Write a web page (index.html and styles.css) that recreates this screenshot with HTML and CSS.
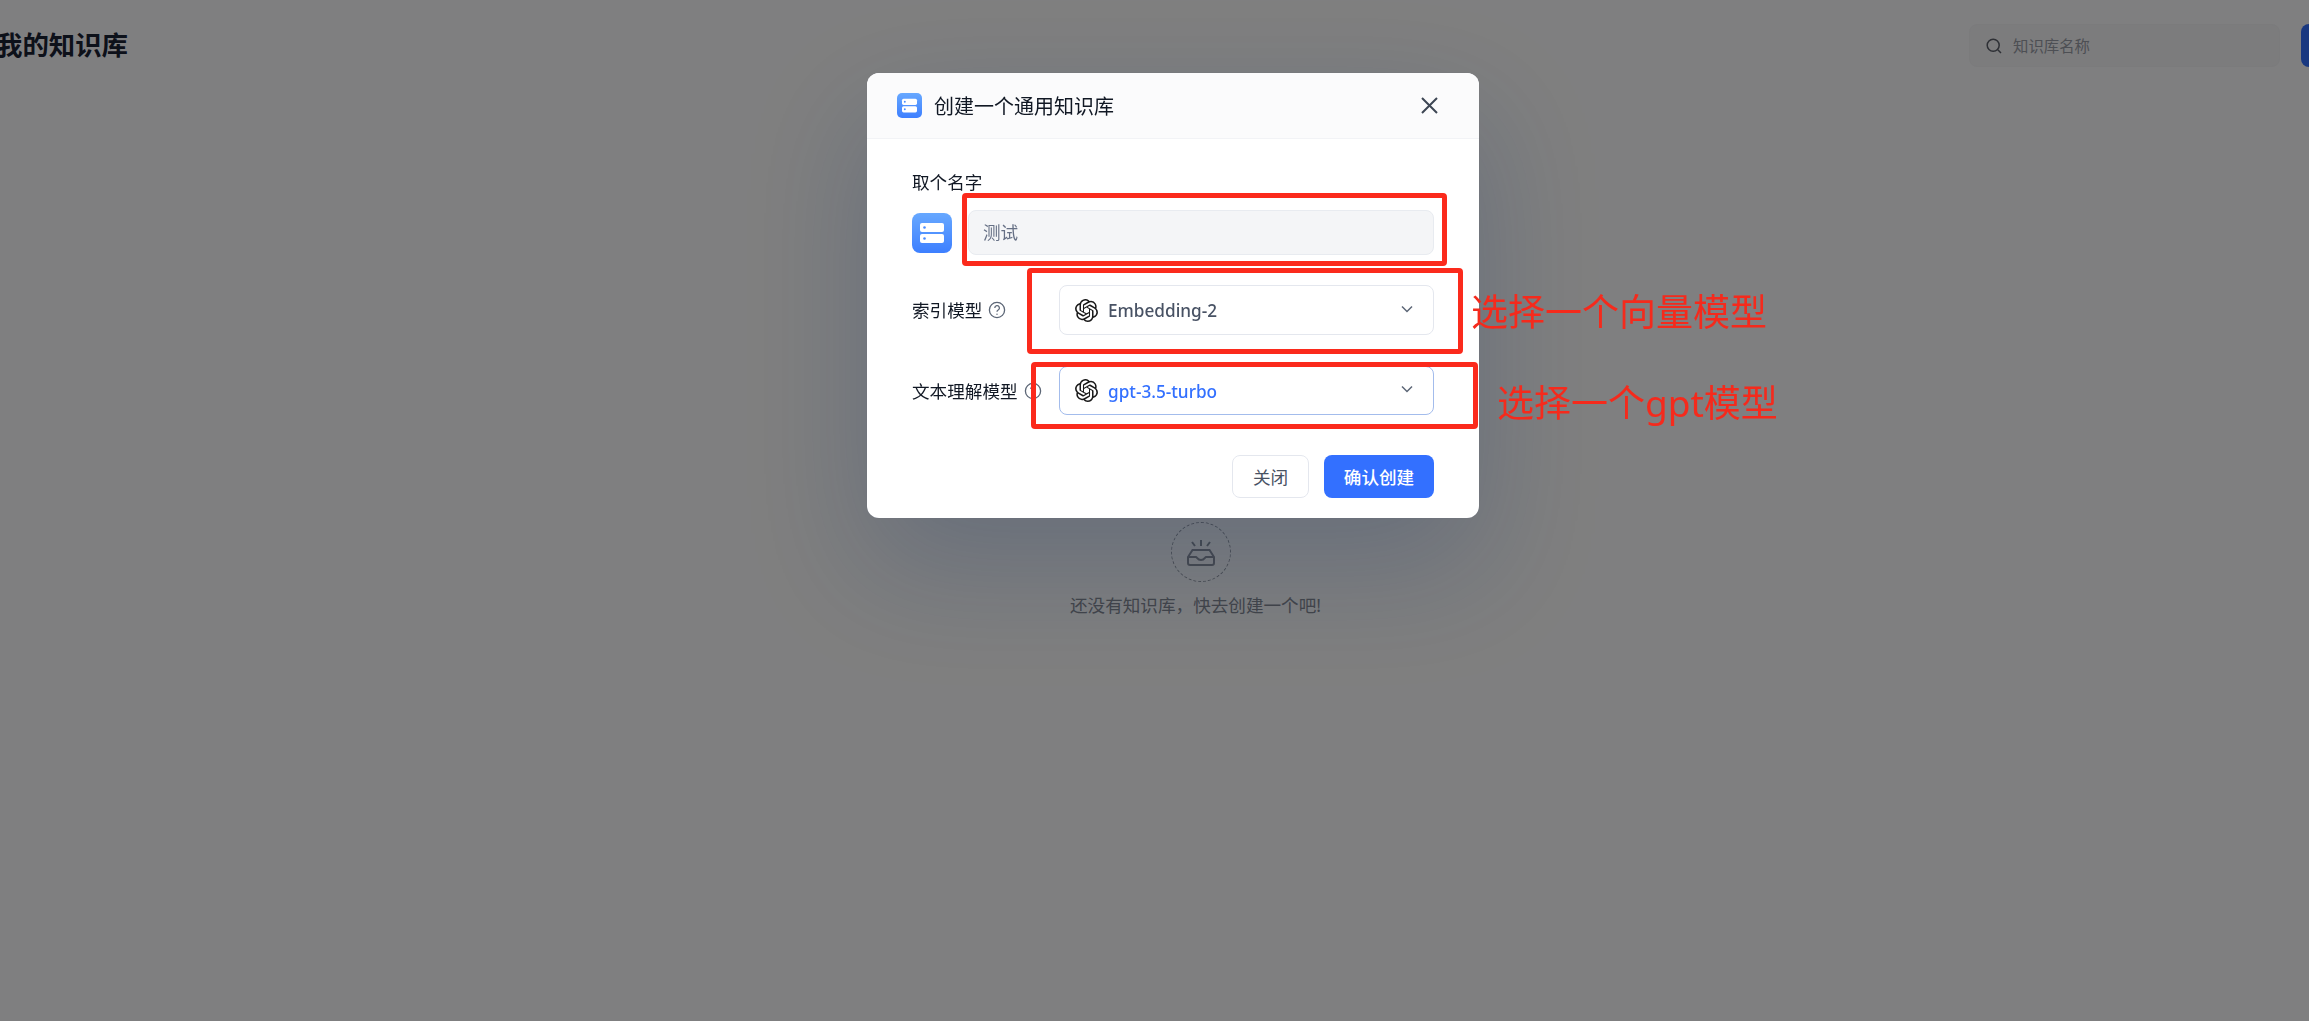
FILE: index.html
```html
<!DOCTYPE html>
<html lang="zh">
<head>
    <meta charset="UTF-8">
    <meta name="viewport" content="width=device-width, initial-scale=1.0">
    <title>我的知识库</title>
    <link rel="stylesheet" href="styles.css">
</head>
<body>
    <header class="topbar">
        <h1 class="page-title">我的知识库</h1>
        <div class="search">
            <svg class="search-icon" viewBox="0 0 16 16"><circle cx="7.2" cy="7.2" r="6"/><path d="M11.8 11.8 15 15"/></svg>
            <span>知识库名称</span>
        </div>
        <div class="new-button"></div>
    </header>

    <main class="empty">
        <div class="empty-circle">
            <svg class="empty-icon" viewBox="0 0 30 27"><path d="M15 1v6M6 3l3 4M24 3l-3 4"/><path d="M6.5 11h17L28 18v6a2 2 0 0 1-2 2H4a2 2 0 0 1-2-2v-6z"/><path d="M2 18h8c1 0 1.500 3 5 3s4-3 5-3h8"/></svg>
        </div>
        <p class="empty-text">还没有知识库&#xFF0C;快去创建一个吧!</p>
    </main>

    <div class="overlay">
        <section class="modal">
            <div class="modal-header">
                <svg class="db-icon db-icon-small" viewBox="0 0 40 40"><defs><linearGradient id="dbGradA" x1="0" y1="0" x2="0" y2="1"><stop offset="0" stop-color="#67a8ff"/><stop offset="1" stop-color="#3d7fff"/></linearGradient></defs><rect width="40" height="40" rx="8" fill="url(#dbGradA)"/><rect x="8" y="9" width="24" height="10" rx="2.500" fill="#fff"/><rect x="8" y="21" width="24" height="10" rx="2.500" fill="#fff"/><circle cx="12.500" cy="14" r="1.500" fill="#4a8cff"/><circle cx="12.500" cy="26" r="1.500" fill="#4a8cff"/></svg>
                <h2 class="modal-title">创建一个通用知识库</h2>
                <svg class="close-icon" viewBox="0 0 17 17"><path d="M1 1l15 15M16 1 1 16"/></svg>
            </div>
            <div class="modal-body">
                <div class="label name-label">取个名字</div>
                <div class="name-row">
                    <svg class="db-icon" viewBox="0 0 40 40"><defs><linearGradient id="dbGradB" x1="0" y1="0" x2="0" y2="1"><stop offset="0" stop-color="#67a8ff"/><stop offset="1" stop-color="#3d7fff"/></linearGradient></defs><rect width="40" height="40" rx="8" fill="url(#dbGradB)"/><rect x="8" y="10" width="24" height="9" rx="2" fill="#fff"/><rect x="8" y="21" width="24" height="9" rx="2" fill="#fff"/><circle cx="12.500" cy="14.500" r="1.300" fill="#4a8cff"/><circle cx="12.500" cy="25.500" r="1.300" fill="#4a8cff"/></svg>
                    <div class="name-input">测试</div>
                </div>

                <div class="field field-first">
                    <div class="label field-label">索引模型
                        <svg class="help-icon" viewBox="0 0 18 18"><circle cx="9" cy="9" r="7.600"/><path d="M6.800 7a2.300 2.300 0 1 1 3.400 2c-.8.500-1.200.9-1.200 1.800"/><circle class="help-dot" cx="9" cy="13.200" r=".7"/></svg>
                    </div>
                    <div class="select">
                        <svg class="openai-icon" viewBox="0 0 24 24"><path d="M22.2819 9.8211a5.9847 5.9847 0 0 0-.5157-4.9108 6.0462 6.0462 0 0 0-6.5098-2.9A6.0651 6.0651 0 0 0 4.9807 4.1818a5.9847 5.9847 0 0 0-3.9977 2.9 6.0462 6.0462 0 0 0 .7427 7.0966 5.98 5.98 0 0 0 .511 4.9107 6.051 6.051 0 0 0 6.5146 2.9001A5.9847 5.9847 0 0 0 13.2599 24a6.0557 6.0557 0 0 0 5.7718-4.2058 5.9894 5.9894 0 0 0 3.9977-2.9001 6.0557 6.0557 0 0 0-.7475-7.0729zm-9.022 12.6081a4.4755 4.4755 0 0 1-2.8764-1.0408l.1419-.0804 4.7783-2.7582a.7948.7948 0 0 0 .3927-.6813v-6.7369l2.02 1.1686a.071.071 0 0 1 .038.052v5.5826a4.504 4.504 0 0 1-4.4945 4.4944zm-9.6607-4.1254a4.4708 4.4708 0 0 1-.5346-3.0137l.142.0852 4.783 2.7582a.7712.7712 0 0 0 .7806 0l5.8428-3.3685v2.3324a.0804.0804 0 0 1-.0332.0615L9.74 19.9502a4.4992 4.4992 0 0 1-6.1408-1.6464zM2.3408 7.8956a4.485 4.485 0 0 1 2.3655-1.9728V11.6a.7664.7664 0 0 0 .3879.6765l5.8144 3.3543-2.0201 1.1685a.0757.0757 0 0 1-.071 0l-4.8303-2.7865A4.504 4.504 0 0 1 2.3408 7.872zm16.5963 3.8558L13.1038 8.364 15.1192 7.2a.0757.0757 0 0 1 .071 0l4.8303 2.7913a4.4944 4.4944 0 0 1-.6765 8.1042v-5.6772a.79.79 0 0 0-.407-.667zm2.0107-3.0231l-.142-.0852-4.7735-2.7818a.7759.7759 0 0 0-.7854 0L9.409 9.2297V6.8974a.0662.0662 0 0 1 .0284-.0615l4.8303-2.7866a4.4992 4.4992 0 0 1 6.6802 4.66zM8.3065 12.863l-2.02-1.1638a.0804.0804 0 0 1-.038-.0567V6.0742a4.4992 4.4992 0 0 1 7.3757-3.4537l-.142.0805L8.704 5.459a.7948.7948 0 0 0-.3927.6813zm1.0976-2.3654l2.602-1.4998 2.6069 1.4998v2.9994l-2.5974 1.4997-2.6067-1.4997Z"/></svg>
                        <span class="select-text">Embedding-2</span>
                        <svg class="chevron" viewBox="0 0 12 8"><path d="M1 1.500 6 6.500 11 1.500"/></svg>
                    </div>
                </div>

                <div class="field field-second">
                    <div class="label field-label">文本理解模型
                        <svg class="help-icon" viewBox="0 0 18 18"><circle cx="9" cy="9" r="7.600"/><path d="M6.800 7a2.300 2.300 0 1 1 3.400 2c-.8.500-1.200.9-1.200 1.800"/><circle class="help-dot" cx="9" cy="13.200" r=".7"/></svg>
                    </div>
                    <div class="select select-active">
                        <svg class="openai-icon" viewBox="0 0 24 24"><path d="M22.2819 9.8211a5.9847 5.9847 0 0 0-.5157-4.9108 6.0462 6.0462 0 0 0-6.5098-2.9A6.0651 6.0651 0 0 0 4.9807 4.1818a5.9847 5.9847 0 0 0-3.9977 2.9 6.0462 6.0462 0 0 0 .7427 7.0966 5.98 5.98 0 0 0 .511 4.9107 6.051 6.051 0 0 0 6.5146 2.9001A5.9847 5.9847 0 0 0 13.2599 24a6.0557 6.0557 0 0 0 5.7718-4.2058 5.9894 5.9894 0 0 0 3.9977-2.9001 6.0557 6.0557 0 0 0-.7475-7.0729zm-9.022 12.6081a4.4755 4.4755 0 0 1-2.8764-1.0408l.1419-.0804 4.7783-2.7582a.7948.7948 0 0 0 .3927-.6813v-6.7369l2.02 1.1686a.071.071 0 0 1 .038.052v5.5826a4.504 4.504 0 0 1-4.4945 4.4944zm-9.6607-4.1254a4.4708 4.4708 0 0 1-.5346-3.0137l.142.0852 4.783 2.7582a.7712.7712 0 0 0 .7806 0l5.8428-3.3685v2.3324a.0804.0804 0 0 1-.0332.0615L9.74 19.9502a4.4992 4.4992 0 0 1-6.1408-1.6464zM2.3408 7.8956a4.485 4.485 0 0 1 2.3655-1.9728V11.6a.7664.7664 0 0 0 .3879.6765l5.8144 3.3543-2.0201 1.1685a.0757.0757 0 0 1-.071 0l-4.8303-2.7865A4.504 4.504 0 0 1 2.3408 7.872zm16.5963 3.8558L13.1038 8.364 15.1192 7.2a.0757.0757 0 0 1 .071 0l4.8303 2.7913a4.4944 4.4944 0 0 1-.6765 8.1042v-5.6772a.79.79 0 0 0-.407-.667zm2.0107-3.0231l-.142-.0852-4.7735-2.7818a.7759.7759 0 0 0-.7854 0L9.409 9.2297V6.8974a.0662.0662 0 0 1 .0284-.0615l4.8303-2.7866a4.4992 4.4992 0 0 1 6.6802 4.66zM8.3065 12.863l-2.02-1.1638a.0804.0804 0 0 1-.038-.0567V6.0742a4.4992 4.4992 0 0 1 7.3757-3.4537l-.142.0805L8.704 5.459a.7948.7948 0 0 0-.3927.6813zm1.0976-2.3654l2.602-1.4998 2.6069 1.4998v2.9994l-2.5974 1.4997-2.6067-1.4997Z"/></svg>
                        <span class="select-text">gpt-3.5-turbo</span>
                        <svg class="chevron" viewBox="0 0 12 8"><path d="M1 1.500 6 6.500 11 1.500"/></svg>
                    </div>
                </div>

                <div class="modal-footer">
                    <button class="btn btn-close" type="button">关闭</button>
                    <button class="btn btn-primary" type="button">确认创建</button>
                </div>
            </div>
        </section>
    </div>

    <!-- red markup drawn on top of the screenshot -->
    <div class="mark mark-name"></div>
    <div class="mark mark-index"></div>
    <div class="mark mark-gpt"></div>
    <div class="note note-index">选择一个向量模型</div>
    <div class="note note-gpt">选择一个gpt模型</div>
</body>
</html>
```

FILE: styles.css
```css
* {
    margin: 0;
    padding: 0;
    box-sizing: border-box;
}
html, body {
    height: 100%;
    overflow: hidden;
}
body {
    font-family: "Noto Sans", "Noto Sans CJK SC", sans-serif;
    font-size: 17.6px;
    background-color: #ffffff;
    color: #111824;
}

/* page behind the dialog */
.topbar {
    display: flex;
    align-items: center;
    width: 2360px;
    height: 67px;
    padding-top: 24px;
}
.page-title {
    margin-left: -4px;
    font-size: 26.4px;
    font-weight: 700;
    line-height: 45px;
    color: #1a2233;
}
.search {
    display: flex;
    align-items: center;
    gap: 11px;
    width: 311px;
    height: 43px;
    margin-left: auto;
    padding-left: 16px;
    background-color: #f8f8f9;
    border: 1px solid #f6f6f7;
    border-radius: 8px;
    font-size: 15.4px;
    color: #9a9ea6;
}
.search-icon {
    width: 16px;
    height: 16px;
    fill: none;
    stroke: #5c6068;
    stroke-width: 1.5;
}
.new-button {
    width: 59px;
    height: 43px;
    margin-left: 21px;
    background-color: #3370ff;
    border-radius: 8px;
}
.empty {
    display: flex;
    flex-direction: column;
    align-items: center;
    width: 253px;
    margin: 455px 0 0 1069px;
}
.empty-circle {
    display: flex;
    align-items: center;
    justify-content: center;
    width: 60px;
    height: 60px;
    margin-left: 11px;
    border: 1px dashed #9a9da3;
    border-radius: 50%;
}
.empty-icon {
    width: 30px;
    height: 27px;
    fill: none;
    stroke: #8f939c;
    stroke-width: 2;
}
.empty-text {
    margin-top: 10px;
    line-height: 26px;
    color: #868a92;
    white-space: nowrap;
}

/* dialog */
.overlay {
    position: fixed;
    inset: 0;
    padding: 73px 0 0 867px;
    background-color: rgba(0, 0, 2, 0.5);
}
.modal {
    width: 612px;
    height: 445px;
    background-color: #ffffff;
    border-radius: 12px;
    overflow: hidden;
    box-shadow: 0 48px 120px 0 rgba(19, 51, 107, 0.22), 0 0 1px rgba(19, 51, 107, 0.2);
}
.modal-header {
    display: flex;
    align-items: center;
    height: 66px;
    padding: 0 41px 0 30px;
    background-color: #fbfbfc;
    border-bottom: 1px solid #f2f3f6;
}
.db-icon {
    flex: none;
    width: 40px;
    height: 40px;
}
.db-icon-small {
    width: 25px;
    height: 25px;
}
.modal-title {
    flex: 1;
    margin-left: 12px;
    font-size: 20px;
    font-weight: 400;
    color: #111824;
}
.close-icon {
    width: 17px;
    height: 17px;
    fill: none;
    stroke: #3d4654;
    stroke-width: 2;
}
.modal-body {
    padding: 31px 45px 20px;
}
.label {
    line-height: 24px;
    color: #111824;
}
.name-row {
    display: flex;
    align-items: center;
    margin-top: 16px;
    gap: 16px;
}
.name-input {
    flex: 1;
    height: 45px;
    padding-left: 14px;
    line-height: 43px;
    background-color: #f4f5f7;
    border: 1px solid #e8ebf0;
    border-radius: 8px;
    color: #667085;
}
.field {
    display: flex;
    align-items: center;
}
.field-first {
    margin-top: 30px;
}
.field-second {
    margin-top: 31px;
}
.field-label {
    display: flex;
    align-items: center;
    gap: 6px;
    width: 147px;
    white-space: nowrap;
}
.help-icon {
    width: 18px;
    height: 18px;
    fill: none;
    stroke: #5c6676;
    stroke-width: 1.3;
}
.help-dot {
    fill: #5c6676;
    stroke: none;
}
.select {
    flex: 1;
    display: flex;
    align-items: center;
    height: 50px;
    padding: 0 20px 0 15px;
    border: 1px solid #e4e7ee;
    border-radius: 8px;
    color: #485264;
    font-weight: 500;
}
.select-active {
    height: 49px;
    border-color: #a3bcec;
    color: #3370ff;
}
.openai-icon {
    flex: none;
    width: 23px;
    height: 23px;
    fill: #1a1a1a;
}
.select-text {
    flex: 1;
    margin-left: 10px;
    font-size: 17.2px;
    line-height: 24px;
    padding-top: 2px;
}
.chevron {
    width: 12px;
    height: 8px;
    fill: none;
    stroke: #5c6676;
    stroke-width: 1.500;
    margin-top: -3px;
}
.modal-footer {
    display: flex;
    justify-content: flex-end;
    gap: 15px;
    margin-top: 40px;
}
.btn {
    height: 43px;
    border-radius: 8px;
    font-family: inherit;
    font-size: 17.6px;
    cursor: pointer;
}
.btn-close {
    width: 77px;
    background-color: #ffffff;
    border: 1px solid #e4e7ee;
    color: #485264;
}
.btn-primary {
    width: 110px;
    background-color: #3370ff;
    border: none;
    color: #ffffff;
    font-weight: 500;
}

/* red annotations */
.mark {
    position: absolute;
    border: 5px solid #fb2a1c;
    border-radius: 4px;
}
.mark-name {
    left: 962px;
    top: 193px;
    width: 485px;
    height: 73px;
}
.mark-index {
    left: 1027px;
    top: 268px;
    width: 436px;
    height: 86px;
}
.mark-gpt {
    left: 1031px;
    top: 362px;
    width: 447px;
    height: 67px;
}
.note {
    position: absolute;
    font-size: 37px;
    line-height: 50px;
    color: #f52a1c;
    white-space: nowrap;
}
.note-index {
    left: 1471px;
    top: 287px;
}
.note-gpt {
    left: 1497px;
    top: 378px;
}
```
